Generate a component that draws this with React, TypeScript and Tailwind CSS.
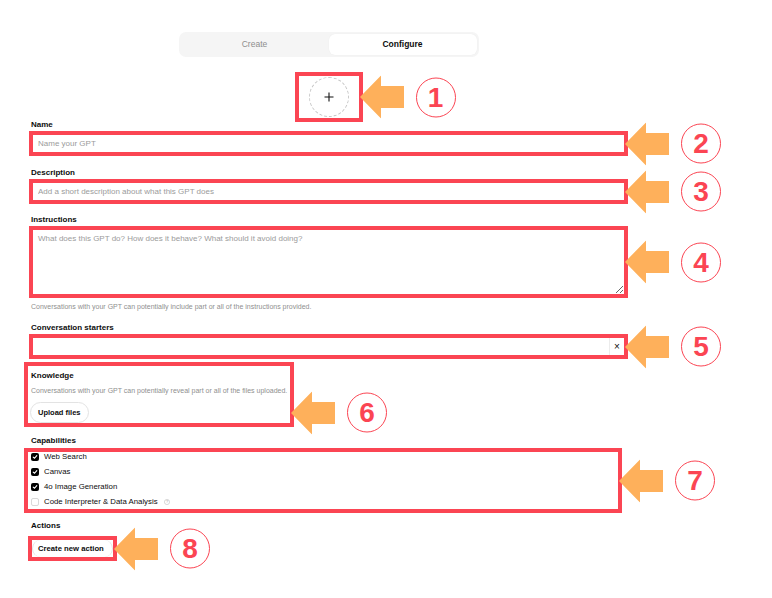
import React from 'react';

function Arrow() {
  return (
    <svg width="44" height="43" viewBox="0 0 44 43" className="shrink-0">
      <path d="M0 21.5 L21 0 V10.5 H44 V32.5 H21 V43 Z" fill="#feb05b" />
    </svg>
  );
}

function Num({ n }: { n: string }) {
  return (
    <div className="w-[40px] h-[40px] shrink-0 rounded-full border-[1.5px] border-[#fb4553] flex items-center justify-center text-[#fb4553] text-[28px] font-bold leading-none">
      {n}
    </div>
  );
}

function Callout({ n, className }: { n: string; className: string }) {
  return (
    <div className={`absolute left-full ml-px flex items-center gap-[12px] -translate-y-1/2 ${className}`}>
      <Arrow />
      <Num n={n} />
    </div>
  );
}

function Label({ children, className = '' }: { children: React.ReactNode; className?: string }) {
  return <div className={`h-[10px] leading-[10px] text-[8px] font-bold pl-[2px] ${className}`}>{children}</div>;
}

function Check({ on, label, help }: { on?: boolean; label: string; help?: boolean }) {
  return (
    <div className="h-[15px] flex items-center gap-[5px]">
      {on ? (
        <span className="w-[8px] h-[8px] rounded-[2px] bg-black flex items-center justify-center">
          <svg width="6" height="6" viewBox="0 0 6 6">
            <path d="M1.2 3.1 L2.5 4.3 L4.8 1.6" stroke="white" strokeWidth="1.1" fill="none" strokeLinecap="round" />
          </svg>
        </span>
      ) : (
        <span className="w-[8px] h-[8px] rounded-[2px] border border-[#d9d9d9] bg-white" />
      )}
      <span className="text-[7.8px] leading-none">{label}</span>
      {help && (
        <svg width="6" height="6" viewBox="0 0 12 12" className="ml-[1px]">
          <circle cx="6" cy="6" r="5.2" fill="none" stroke="#b4b4b4" strokeWidth="1" />
          <text x="6" y="8.6" textAnchor="middle" fontSize="7.5" fill="#9a9a9a" fontFamily="Liberation Sans, Arial, sans-serif">?</text>
        </svg>
      )}
    </div>
  );
}

export default function App() {
  return (
    <div className="w-[772px] h-[598px] bg-white overflow-hidden font-['Liberation_Sans',Arial,sans-serif] text-[#0d0d0d]">
      <div className="ml-[29px] w-[599px] pt-[32px] flex flex-col">
        <div className="self-center w-[300px] h-[25px] rounded-[7px] bg-[#f5f5f5] p-[2px] grid grid-cols-2 text-[8.5px]">
          <div className="flex items-center justify-center text-[#8e8e8e]">Create</div>
          <div className="flex items-center justify-center rounded-[6px] bg-white font-bold shadow-[0_0_1px_rgba(0,0,0,0.08)]">Configure</div>
        </div>

        <div className="relative self-center mt-[15px] w-[68px] h-[50px] border-4 border-[#fb4553] flex items-center justify-center">
          <div className="w-[40px] h-[40px] rounded-full border border-dashed border-[#c8c8c8] flex items-center justify-center">
            <svg width="10" height="10" viewBox="0 0 10 10">
              <path d="M5 0.5 V9.5 M0.5 5 H9.5" stroke="#111" strokeWidth="1.1" />
            </svg>
          </div>
          <Callout n="1" className="top-1/2" />
        </div>

        <Label className="-mt-[2px] mb-px">Name</Label>
        <div className="relative h-[25px] border-4 border-[#fb4553]">
          <input className="block w-full h-[17px] p-0 pl-[5px] text-[8px] leading-[17px] outline-none placeholder:text-[#9b9b9b]" placeholder="Name your GPT" />
          <Callout n="2" className="top-1/2" />
        </div>

        <Label className="mt-[12px] mb-px">Description</Label>
        <div className="relative h-[25px] border-4 border-[#fb4553]">
          <input className="block w-full h-[17px] p-0 pl-[5px] text-[8px] leading-[17px] outline-none placeholder:text-[#9b9b9b]" placeholder="Add a short description about what this GPT does" />
          <Callout n="3" className="top-1/2" />
        </div>

        <Label className="mt-[11px] mb-px">Instructions</Label>
        <div className="relative h-[72px] border-4 border-[#fb4553]">
          <textarea className="block w-full h-full p-0 pl-[5px] pt-[4px] text-[8px] leading-[10px] outline-none resize-y placeholder:text-[#9b9b9b]" placeholder="What does this GPT do? How does it behave? What should it avoid doing?" />
          <Callout n="4" className="top-1/2" />
        </div>
        <div className="mt-[4px] pl-[2px] text-[7px] leading-[9px] text-[#8f8f8f]">
          Conversations with your GPT can potentially include part or all of the instructions provided.
        </div>

        <Label className="mt-[12px] mb-px">Conversation starters</Label>
        <div className="relative h-[25px] border-4 border-[#fb4553] flex">
          <input className="flex-1 h-[17px] p-0 pl-[5px] text-[8px] leading-[17px] outline-none" />
          <div className="w-[15px] border-l border-[#ececec] flex items-center justify-center text-[10px] leading-none">×</div>
          <Callout n="5" className="top-1/2" />
        </div>

        <div className="relative mt-[3px] -ml-[5px] w-[270px] h-[65px] border-4 border-[#fb4553] pl-[1px] pt-[5px] flex flex-col items-start">
          <Label>Knowledge</Label>
          <div className="mt-[4.5px] pl-[2px] text-[7px] leading-[9px] text-[#8f8f8f]">
            Conversations with your GPT can potentially reveal part or all of the files uploaded.
          </div>
          <button className="mt-[7.5px] ml-px h-[21px] px-[7px] rounded-full border border-[#e3e3e3] bg-white text-[7.5px] font-bold">
            Upload files
          </button>
          <Callout n="6" className="top-[calc(50%+18px)]" />
        </div>

        <Label className="mt-[9px] mb-[2px]">Capabilities</Label>
        <div className="relative -ml-[5px] w-[598px] h-[65px] border-4 border-[#fb4553] pl-[3px]">
          <div className="-mt-[3px] flex flex-col">
            <Check on label="Web Search" />
            <Check on label="Canvas" />
            <Check on label="4o Image Generation" />
            <Check label="Code Interpreter & Data Analysis" help />
          </div>
          <Callout n="7" className="top-1/2" />
        </div>

        <Label className="mt-[8px] mb-[5px]">Actions</Label>
        <div className="relative -ml-px w-[89px] h-[25px] border-4 border-[#fb4553] flex items-center">
          <button className="h-full w-full pl-[5px] rounded-full border-x border-[#e3e3e3] bg-white text-[7.7px] font-bold text-left">
            Create new action
          </button>
          <Callout n="8" className="top-1/2" />
        </div>
      </div>
    </div>
  );
}
